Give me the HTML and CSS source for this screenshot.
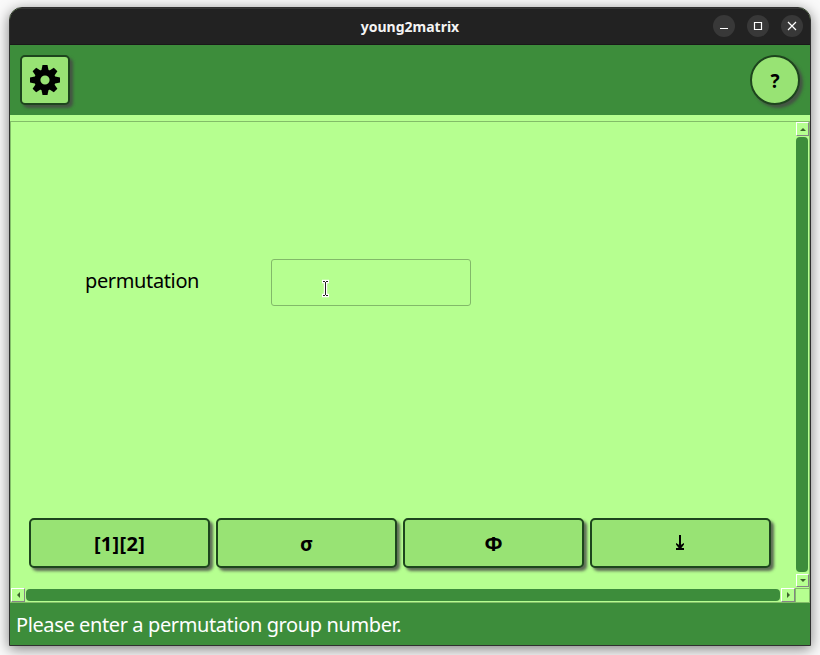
FILE: index.html
```html
<!DOCTYPE html>
<html lang="en">
<head>
<meta charset="utf-8">
<title>young2matrix</title>
<link rel="stylesheet" href="styles.css">
</head>
<body>
<div class="window">
  <div class="titlebar">
    <div class="title"><span>young2matrix</span></div>
    <div class="controls">
      <span class="control"><svg width="22" height="22"><path d="M7 13.5h8" /></svg></span>
      <span class="control"><svg width="22" height="22"><path d="M7.5 7.5h7v7h-7z" /></svg></span>
      <span class="control"><svg width="22" height="22"><path d="M7 7l8 8M15 7l-8 8" /></svg></span>
    </div>
  </div>
  <header class="toolbar">
    <button class="btn square" aria-label="Settings">
      <svg width="30" height="30" viewBox="-15 -15 30 30">
        <defs><path id="tooth" d="M-3.7 -9L-2.5 -15H2.5L3.7 -9Z" /></defs>
        <use href="#tooth" /><use href="#tooth" transform="rotate(45)" /><use href="#tooth" transform="rotate(90)" /><use href="#tooth" transform="rotate(135)" />
        <use href="#tooth" transform="rotate(180)" /><use href="#tooth" transform="rotate(225)" /><use href="#tooth" transform="rotate(270)" /><use href="#tooth" transform="rotate(315)" />
        <circle r="7.6" fill="none" stroke="#000" stroke-width="6" />
      </svg>
    </button>
    <button class="btn square round">?</button>
  </header>
  <main class="scroll-area">
    <section class="content">
      <div class="form-row">
        <label class="field-label" for="perm"><span>permutation</span></label>
        <div class="field">
          <input id="perm" type="text">
          <svg class="cursor" width="9" height="19" viewBox="0 0 9 19">
            <path d="M1 2.5H8M1 16.5H8M4.500 2V17" stroke="#fff" stroke-width="3.4" fill="none" />
            <path d="M2 2.500H4M5 2.500H7M2 16.500H4M5 16.500H7M4.500 3V16" stroke="#222" stroke-width="1" fill="none" />
          </svg>
        </div>
      </div>
      <div class="actions">
        <button class="btn"><span class="brackets">[1][2]</span></button>
        <button class="btn">σ</button>
        <button class="btn">Φ</button>
        <button class="btn" aria-label="Download">
          <svg class="download" width="10" height="16"><path d="M5 0V12M1 14H9" stroke="#000" stroke-width="2" fill="none" /><path d="M1 8Q3.500 9 5 11Q6.500 9 9 8V9.500L6 13.500H4L1 9.500Z" /></svg>
        </button>
      </div>
    </section>
    <div class="vbar">
      <span class="arrow"><svg width="6" height="3"><path d="M0 3L3 0L6 3Z" /></svg></span>
      <span class="thumb"></span>
      <span class="arrow"><svg width="6" height="3"><path d="M0 0L3 3L6 0Z" /></svg></span>
    </div>
    <div class="hbar">
      <span class="arrow"><svg width="3" height="6"><path d="M3 0L0 3L3 6Z" /></svg></span>
      <span class="thumb"></span>
      <span class="arrow"><svg width="3" height="6"><path d="M0 0L3 3L0 6Z" /></svg></span>
    </div>
    <div class="corner"></div>
  </main>
  <footer class="status"><span>Please enter a permutation group number.</span></footer>
</div>
</body>
</html>
```
FILE: styles.css
```css
* { box-sizing: border-box; }
body {
  margin: 0;
  height: 655px;
  padding: 7px 9px 9px;
  overflow: hidden;
  background: #fafafa;
  font-family: "Noto Sans", "Open Sans", sans-serif;
}
.window {
  width: 802px;
  height: 639px;
  display: flex;
  flex-direction: column;
  overflow: hidden;
  border: 1px solid #303030;
  border-radius: 13px 13px 0 0;
  background: #b6ff90;
  box-shadow: 0 3px 14px rgba(0, 0, 0, .5);
}
.titlebar {
  height: 37px;
  flex: none;
  display: grid;
  grid-template-columns: 100px 1fr 100px;
  background: #222;
  border-top: 1px solid #363636;
  border-bottom: 1px solid #191919;
}
.title {
  grid-column: 2;
  display: flex;
  align-items: center;
  justify-content: center;
  color: #f4f4f4;
  font-size: 14px;
  font-weight: 700;
}
.controls {
  display: flex;
  gap: 12px;
  padding: 6px 0 0 3px;
}
.control {
  width: 22px;
  height: 22px;
  border-radius: 50%;
  background: #383838;
}
.control svg { display: block; fill: none; stroke: #fff; stroke-width: 1.2; }
.toolbar {
  height: 70px;
  flex: none;
  display: flex;
  justify-content: space-between;
  padding: 10px;
  background: #3d8d3b;
}
.btn {
  height: 50px;
  flex: 1;
  display: flex;
  align-items: center;
  justify-content: center;
  padding: 0;
  border: 2px solid #1d451d;
  border-radius: 5px;
  background: #98e374;
  box-shadow: 3px 3px 3px rgba(70, 70, 70, .8);
  color: #000;
  font: 700 20px "Noto Sans", sans-serif;
}
.brackets { letter-spacing: .3px; }
.download { margin-right: 1px; }
.square { flex: none; width: 50px; }
.round { border-radius: 50%; font-size: 19px; padding-top: 1px; }
.scroll-area {
  height: 482px;
  flex: none;
  margin-top: 6px;
  display: grid;
  grid-template: 466px 14px / 784px 14px;
  border: 1px solid #82bd68;
}
.content {
  display: flex;
  flex-direction: column;
  justify-content: space-between;
  padding: 137px 24px 20px 18px;
}
.form-row {
  display: flex;
  align-items: center;
  padding-left: 56px;
}
.field-label {
  width: 186px;
  margin-top: -4px;
  font-size: 20px;
  line-height: 28px;
  letter-spacing: -.37px;
}
.field { position: relative; width: 200px; height: 47px; }
.field input {
  display: block;
  width: 100%;
  height: 100%;
  border: 1px solid #82b969;
  border-radius: 3px;
  background: transparent;
  font: 20px "Noto Sans", sans-serif;
}
.cursor { position: absolute; left: 50px; top: 20px; }
.actions { display: flex; gap: 6px; width: 742px; }
.vbar, .hbar { display: flex; justify-content: space-between; }
.vbar { flex-direction: column; align-items: flex-start; padding-left: 1px; }
.thumb { flex: 1; background: #3d8d3b; border-radius: 4px; }
.vbar .thumb { width: 12px; margin: 1px 0 2px; }
.hbar .thumb { height: 12px; margin: 1px 0 1px 1px; }
.arrow {
  display: flex;
  align-items: center;
  justify-content: center;
  width: 14px;
  height: 14px;
  flex: none;
  border: 1px solid #fff;
  border-right-color: #858585;
  border-bottom-color: #858585;
}
.vbar .arrow { width: 13px; }
.vbar .arrow:last-child { margin-bottom: 1px; height: 13px; }
.hbar .arrow:last-child { margin-left: 1px; }
.arrow svg { fill: #3c632c; }
.corner { border: solid #82bd68; border-width: 1px 0 0 1px; }
.status {
  flex: 1;
  display: flex;
  align-items: center;
  padding: 0 0 0 6px;
  background: #3d8d3b;
  color: #fff;
  font-size: 20px;
  letter-spacing: -.39px;
}
```
